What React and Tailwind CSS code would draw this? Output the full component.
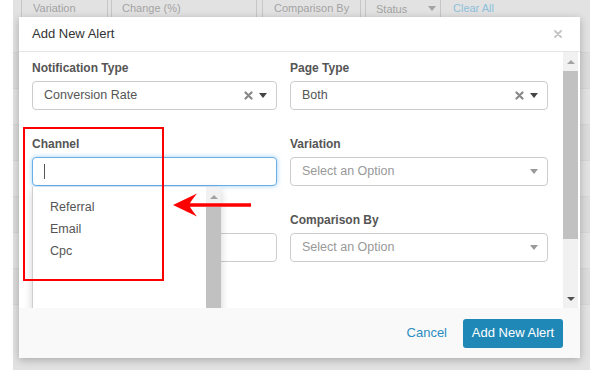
import React from "react";

const Caret = ({ color = "#555" }) => (
  <span
    className="inline-block w-0 h-0 border-l-[4px] border-r-[4px] border-t-[5px] border-l-transparent border-r-transparent"
    style={{ borderTopColor: color }}
  />
);

const ClearX = () => (
  <svg width="9" height="9" viewBox="0 0 9 9" className="block">
    <path d="M1.5 1.5 L7.5 7.5 M7.5 1.5 L1.5 7.5" stroke="#888" strokeWidth="2.2" strokeLinecap="round" />
  </svg>
);

const Label = ({ children }) => (
  <div className="text-[12px] font-bold leading-[14px] text-[#555] mb-[6px] h-[14px]">{children}</div>
);

const SelectBox = ({ value, placeholder, clearable }) => (
  <div className="h-[29px] border border-[#cccccc] rounded-[4px] bg-white flex items-center pl-[11px] pr-[9px]">
    <span className={"flex-1 text-[12.5px] " + (value ? "text-[#555]" : "text-[#999]")}>
      {value || placeholder}
    </span>
    {clearable && (
      <span className="mr-[6px]">
        <ClearX />
      </span>
    )}
    <Caret color={value ? "#444" : "#999"} />
  </div>
);

export default function App() {
  return (
    <div
      className="w-[602px] h-[383px] bg-white overflow-hidden"
      style={{ fontFamily: '"Liberation Sans", Arial, sans-serif' }}
    >
      <div className="relative ml-[13px] w-[577px] h-[370px] bg-[#e2e2e2]">
        {/* table header behind the dialog */}
        <div className="flex h-[17px] text-[11px] leading-[16px] text-[#a3a3a3] whitespace-nowrap">
          <div className="ml-[8px] w-[87px] border-l border-r border-[#c6c6c6] pl-[11px]">Variation</div>
          <div className="ml-[3px] w-[146px] border-l border-r border-[#c6c6c6] pl-[10px]">Change (%)</div>
          <div className="ml-[5px] w-[99px] border-l border-r border-[#c6c6c6] pl-[11px]">Comparison By</div>
          <div className="ml-[4px] w-[76px] border-l border-r border-[#c6c6c6] pl-[10px] pr-[4px] flex items-center justify-between">
            <span>Status</span>
            <Caret color="#a3a3a3" />
          </div>
          <div className="ml-[12px] text-[#8cc0dc]">Clear All</div>
        </div>
        <div className="flex flex-col">
          <div className="h-[36px] border-b border-[#d6d6d6]" />
          <div className="h-[36px] border-b border-[#d6d6d6] bg-[#dcdcdc]" />
          <div className="h-[36px] border-b border-[#d6d6d6]" />
          <div className="h-[36px] border-b border-[#d6d6d6] bg-[#dcdcdc]" />
          <div className="h-[36px] border-b border-[#d6d6d6]" />
          <div className="h-[36px] border-b border-[#d6d6d6] bg-[#dcdcdc]" />
          <div className="h-[36px] border-b border-[#d6d6d6]" />
          <div className="h-[36px] border-b border-[#d6d6d6] bg-[#dcdcdc]" />
        </div>

        {/* modal dialog */}
        <div className="absolute left-[6px] top-[17px] w-[561px] h-[341px] bg-white flex flex-col shadow-[0_2px_8px_rgba(0,0,0,0.25)]">
          <div className="h-[35px] border-b border-[#e5e5e5] flex items-center justify-between pl-[13px] pr-[18px]">
            <span className="text-[13px] text-[#333]">Add New Alert</span>
            <svg width="8" height="8" viewBox="0 0 8 8" className="block">
              <path d="M1 1 L7 7 M7 1 L1 7" stroke="#c4c4c4" strokeWidth="1.8" strokeLinecap="round" />
            </svg>
          </div>

          <div className="relative h-[256px] flex overflow-hidden">
            <div className="w-[544px] pl-[13px] pt-[9px]">
              <div className="grid grid-cols-[245px_258px] gap-x-[13px] gap-y-[27px]">
                <div>
                  <Label>Notification Type</Label>
                  <SelectBox value="Conversion Rate" clearable />
                </div>
                <div>
                  <Label>Page Type</Label>
                  <SelectBox value="Both" clearable />
                </div>
                <div>
                  <Label>Channel</Label>
                  <div className="h-[29px] border border-[#66afe9] rounded-[4px] bg-white flex items-center pl-[11px] shadow-[0_0_5px_rgba(102,175,233,0.6)]">
                    <span className="w-px h-[15px] bg-[#555]" />
                  </div>
                </div>
                <div>
                  <Label>Variation</Label>
                  <SelectBox placeholder="Select an Option" />
                </div>
                <div>
                  <Label />
                  <div className="h-[29px] border border-[#cccccc] rounded-[4px] bg-white" />
                </div>
                <div>
                  <Label>Comparison By</Label>
                  <SelectBox placeholder="Select an Option" />
                </div>
              </div>
            </div>

            {/* body scrollbar */}
            <div className="w-[15px] flex flex-col bg-[#f1f1f1]">
              <div className="h-[19px] flex items-center justify-center">
                <span className="w-0 h-0 border-l-[4px] border-r-[4px] border-b-[4px] border-l-transparent border-r-transparent border-b-[#a3a3a3]" />
              </div>
              <div className="h-[168px] bg-[#c1c1c1]" />
              <div className="flex-1" />
              <div className="h-[18px] flex items-center justify-center">
                <span className="w-0 h-0 border-l-[4px] border-r-[4px] border-t-[4px] border-l-transparent border-r-transparent border-t-[#505050]" />
              </div>
            </div>

            {/* channel dropdown */}
            <div className="absolute left-[13px] top-[135px] w-[189px] h-[140px] bg-white flex border-l border-[#cfcfcf] shadow-[0_3px_8px_rgba(0,0,0,0.18)]">
              <div className="flex-1 pl-[17px] pt-[9px] text-[12.5px] leading-[22px] text-[#555]">
                <div>Referral</div>
                <div>Email</div>
                <div>Cpc</div>
              </div>
              <div className="w-[15px] flex flex-col bg-[#f1f1f1]">
                <div className="h-[20px] flex items-center justify-center">
                  <span className="w-0 h-0 border-l-[4px] border-r-[4px] border-b-[4px] border-l-transparent border-r-transparent border-b-[#a3a3a3]" />
                </div>
                <div className="flex-1 bg-[#c1c1c1]" />
              </div>
            </div>
          </div>

          <div className="flex-1 bg-[#f9f9f9] flex items-center justify-end pr-[17px] gap-[16px]">
            <span className="text-[13px] text-[#2a8cc0]">Cancel</span>
            <div className="h-[29px] w-[100px] bg-[#1f88b6] rounded-[3px] flex items-center justify-center text-[13px] text-white">
              Add New Alert
            </div>
          </div>

          {/* annotations */}
          <div className="absolute left-[4px] top-[110px] w-[141px] h-[154px] border-2 border-[#ff0000]" />
          <svg
            className="absolute left-[154px] top-[176px]"
            width="78"
            height="24"
            viewBox="0 0 78 24"
          >
            <path
              d="M0 12 L24 0.5 Q18 8 17 10.3 L78 10.3 L78 13.7 L17 13.7 Q18 16 24 23.5 Z"
              fill="#ff0000"
            />
          </svg>
        </div>
      </div>
    </div>
  );
}
